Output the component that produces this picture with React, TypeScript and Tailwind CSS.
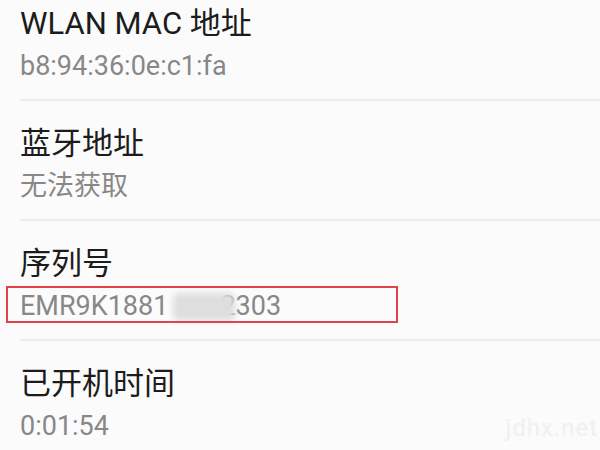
const rows = [
  { title: 'WLAN MAC 地址', value: 'b8:94:36:0e:c1:fa' },
  { title: '蓝牙地址', value: '无法获取' },
  { title: '序列号', value: 'serial' },
  { title: '已开机时间', value: '0:01:54' },
];

// serial number with the middle digits smudged out, as in the screenshot
function Serial() {
  return (
    <span className="relative inline-flex">
      <span>EMR9K1881</span>
      <span className="w-[52px]" />
      <span>2303</span>
      <span className="absolute left-[153px] top-[5px] h-[28px] w-[62px] rounded-[6px] bg-[#dedede] blur-[3px]" />
    </span>
  );
}

export default function App() {
  return (
    <div className="relative h-[450px] w-[600px] overflow-hidden bg-[#fbfbfb] font-['Roboto','Noto_Sans_CJK_SC',sans-serif]">
      <div className="-mt-[19px] flex flex-col">
        {rows.map((r, i) => (
          <div key={i} className="relative flex h-[120px] pl-[20px]">
            <div className="flex flex-1 flex-col border-b-2 border-[#ebebeb] pt-[23px]">
              <div className="text-[31px] leading-[40px] text-[#1c1c1c]">{r.title}</div>
              <div className="mt-[4px] text-[27px] leading-[36px] text-[#888888]">
                {r.value === 'serial' ? <Serial /> : r.value}
              </div>
            </div>
            {r.value === 'serial' && (
              <div className="absolute left-[6px] top-[65px] h-[37px] w-[392px] border-2 border-[#e2434b]" />
            )}
          </div>
        ))}
      </div>
      <div className="absolute bottom-[4px] right-[2px] text-[24px] tracking-[1px] text-[#f0f0f0]">jdhx.net</div>
    </div>
  );
}
